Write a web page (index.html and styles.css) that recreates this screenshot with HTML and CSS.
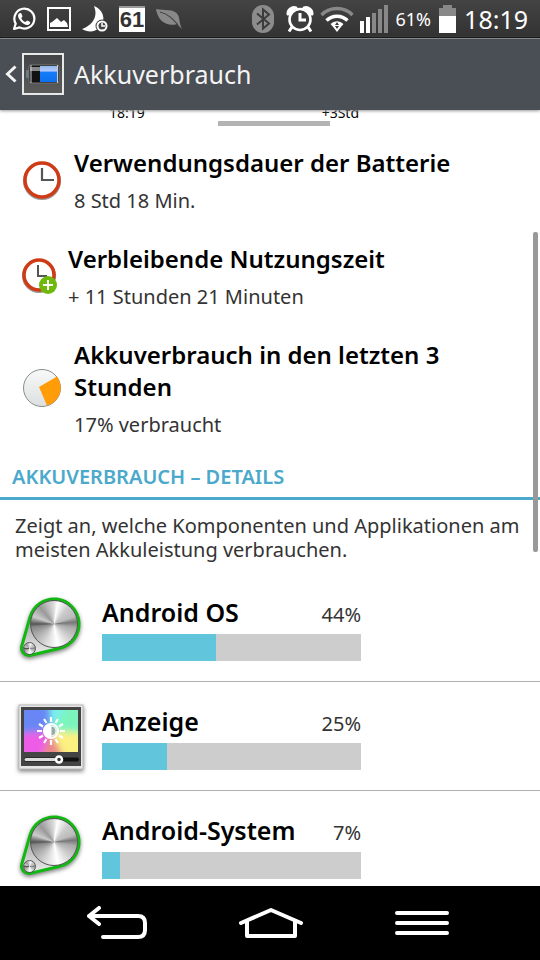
FILE: index.html
```
<!doctype html>
<html lang="de">
<head>

  <meta charset="utf-8">
  <meta name="viewport" content="width=device-width, initial-scale=1">

  <title>Akkuverbrauch</title>

  <link rel="stylesheet" href="styles.css">

</head>
<body>

  <div class="status-bar">
    <div class="notifications">
      <!-- messenger -->
      <svg width="24" height="24" viewBox="0 0 24 24">
        <path d="M2 22l1.700-5.400A10 10 0 1 1 7.600 20.400z" fill="none" stroke="#fff" stroke-width="2.200" stroke-linejoin="round"/>
        <path d="M8 6c-4 1.500-1 6.500 1.500 9s6 4.500 8.500 1.500c.8-1.500-.5-2-2.900-3l-1.600 1.500c-2-.5-3.500-2-4.200-4l1.200-1.500C9.700 7 9.500 5.500 8 6z" fill="#fff"/>
      </svg>
      <!-- picture -->
      <svg width="24" height="24" viewBox="0 0 24 24">
        <rect x="1" y="1" width="22" height="22" fill="none" stroke="#fff" stroke-width="2"/>
        <path d="M3 20v-4l2-1 5-4 4 4 3-2 3 3 1 4z" fill="#fff"/>
      </svg>
      <!-- moon with clock -->
      <svg width="26" height="26" viewBox="0 0 26 26">
        <path d="M12 0c4 9 0 19-12 23 6 4 14 3 18-2 6-7 4-17-6-21z" fill="#fff"/>
        <circle cx="20" cy="20" r="6.500" fill="#3c3c3c"/>
        <circle cx="20" cy="20" r="4.500" fill="#444" stroke="#fff" stroke-width="2"/>
        <path d="M20 17v3h3" fill="none" stroke="#fff" stroke-width="1.500"/>
      </svg>
      <span class="counter">61</span>
      <!-- leaf -->
      <svg width="26" height="22" viewBox="0 0 26 22">
        <path d="M0 1c8 2 18-1 22 6 2 4 1 8 4 14l-5-5C12 19 2 14 0 1z" fill="#888"/>
        <path d="M4 4c8 2 12 6 18 13" fill="none" stroke="#444" stroke-width="1.200"/>
      </svg>
    </div>
    <div class="system">
      <!-- bluetooth -->
      <svg class="icon-bt" width="22" height="28" viewBox="0 0 22 28">
        <rect width="22" height="28" rx="11" fill="#8c8c8c"/>
        <path d="M5 8.500l12 10-6 5V4.500l6 5-12 10" fill="none" stroke="#3c3c3c" stroke-width="2"/>
      </svg>
      <!-- alarm -->
      <svg width="28" height="28" viewBox="0 0 28 28">
        <path d="M2 9a6 6 0 0 1 8-6zM26 9a6 6 0 0 0-8-6zM6 22l-3 4.500M22 22l3 4.500" fill="#fff" stroke="#fff" stroke-width="3" stroke-linejoin="round"/>
        <circle cx="14" cy="14.500" r="10.500" fill="#3c3c3c" stroke="#fff" stroke-width="2.600"/>
        <path d="M14 8v7h6" fill="none" stroke="#fff" stroke-width="3"/>
      </svg>
      <!-- wifi -->
      <svg width="34" height="26" viewBox="0 0 34 26">
        <path d="M1.500 9a22 22 0 0 1 31 0" fill="none" stroke="#888" stroke-width="3.500"/>
        <path d="M6.500 14.500a15 15 0 0 1 21 0" fill="none" stroke="#fff" stroke-width="3.500"/>
        <path d="M10.500 18a9 9 0 0 1 13 0l-3 3.500L17 26l-3.500-4.500z" fill="#fff"/>
        <path d="M17 16l2 3h-4zM13 20h2l2 3 2-3h2" fill="#3c3c3c"/>
      </svg>
      <!-- signal -->
      <svg width="28" height="28" viewBox="0 0 28 28">
        <path d="M0 16h4v12H0zM6 12h4v16H6z" fill="#fff"/>
        <path d="M12 8h4v20h-4zM18 4h4v24h-4zM24 0h4v28h-4z" fill="#888"/>
      </svg>
      <span class="charge">61%</span>
      <!-- battery -->
      <svg width="17" height="28" viewBox="0 0 17 28">
        <path d="M4 0h9v3h4v8H0V3h4z" fill="#888"/>
        <path d="M0 11h17v17H0z" fill="#fff"/>
      </svg>
      <time class="clock">18:19</time>
    </div>
  </div>

  <header class="title-bar">
    <button class="back" aria-label="Zurück">
      <svg width="12" height="18" viewBox="0 0 12 18">
        <path d="M10.500 1.500L2.500 9l8 7.500" fill="none" stroke="#f4f4f4" stroke-width="3"/>
      </svg>
      <svg width="42" height="42" viewBox="0 0 42 42">
        <defs>
          <linearGradient id="frame" x1="0" y1="0" x2="0" y2="1">
            <stop offset="0" stop-color="#414345"/>
            <stop offset="1" stop-color="#5c5c5c"/>
          </linearGradient>
          <linearGradient id="cell" x1="0" y1="0" x2="0" y2="1">
            <stop offset="0" stop-color="#8fb8e8"/>
            <stop offset=".3" stop-color="#b5c9ff"/>
            <stop offset=".4" stop-color="#147dfa"/>
            <stop offset="1" stop-color="#0f6fee"/>
          </linearGradient>
        </defs>
        <rect x="1" y="1" width="40" height="40" fill="url(#frame)" stroke="#e8e8e8" stroke-width="2"/>
        <rect x="4" y="17" width="4" height="8" rx="1" fill="#6c7b88"/>
        <rect x="7" y="12" width="30" height="18" rx="2" fill="#111" stroke="#777"/>
        <rect x="8" y="14" width="10" height="4" fill="#888"/>
        <rect x="18" y="13" width="17" height="16" fill="url(#cell)"/>
        <path d="M9 12v18M35.500 12v18" stroke="#ccc"/>
      </svg>
    </button>
    <h1>Akkuverbrauch</h1>
  </header>

  <main class="content">

    <div class="axis">
      <span>18:19</span>
      <span>+3Std</span>
    </div>
    <div class="handle"></div>

    <section class="summary">
      <div class="entry">
        <svg width="40" height="40" viewBox="0 0 40 40">
          <circle cx="20" cy="21" r="18" fill="none" stroke="#999" stroke-width="2"/>
          <circle cx="20" cy="20" r="17" fill="#fff" stroke="#cf3b16" stroke-width="3.500"/>
          <path d="M20 8v12h12" fill="none" stroke="#555" stroke-width="2.200"/>
        </svg>
        <div>
          <h2>Verwendungsdauer der Batterie</h2>
          <p>8 Std 18 Min.</p>
        </div>
      </div>
      <div class="entry small">
        <svg width="36" height="36" viewBox="0 0 36 36">
          <circle cx="17" cy="18" r="16" fill="none" stroke="#999" stroke-width="2"/>
          <circle cx="17" cy="17" r="15" fill="#fff" stroke="#cf3b16" stroke-width="3.500"/>
          <path d="M16 7v11h9" fill="none" stroke="#555" stroke-width="2"/>
          <circle cx="26" cy="27" r="9" fill="#6fb90b"/>
          <path d="M26 22v10M21 27h10" stroke="#fff" stroke-width="2"/>
        </svg>
        <div>
          <h2>Verbleibende Nutzungszeit</h2>
          <p>+ 11 Stunden 21 Minuten</p>
        </div>
      </div>
      <div class="entry">
        <svg width="40" height="40" viewBox="0 0 40 40">
          <defs>
            <linearGradient id="pie" x1="0" y1="0" x2="0" y2="1">
              <stop offset="0" stop-color="#f8f9f9"/>
              <stop offset="1" stop-color="#dde0e0"/>
            </linearGradient>
          </defs>
          <circle cx="20" cy="20" r="18.500" fill="url(#pie)" stroke="#8c8c8c"/>
          <path d="M17 19L35 8.500A18.500 18.500 0 0 1 25 37.500z" fill="#ff9c08"/>
        </svg>
        <div>
          <h2>Akkuverbrauch in den letzten 3 Stunden</h2>
          <p>17% verbraucht</p>
        </div>
      </div>
    </section>

    <section class="details">
      <h3>AKKUVERBRAUCH – DETAILS</h3>
      <p class="hint">Zeigt an, welche Komponenten und Applikationen am meisten Akkuleistung verbrauchen.</p>

      <ul class="usage">
        <li>
          <svg class="app-icon" width="66" height="66" viewBox="0 0 66 66">
            <defs>
              <linearGradient id="plate" x1="0" y1="0" x2="0" y2="1">
                <stop offset="0" stop-color="#777"/>
                <stop offset="1" stop-color="#eee"/>
              </linearGradient>
            </defs>
            <path class="knob-plate" d="M12 22.200A25 25 0 1 1 41.800 53.300L12.700 60.300A7.500 7.500 0 0 1 3.800 51z" fill="url(#plate)" stroke="#12b812" stroke-width="3"/>
            <foreignObject x="12" y="5" width="48" height="48"><div class="metal"></div></foreignObject>
            <foreignObject x="5" y="47" width="13" height="13"><div class="metal"></div></foreignObject>
          </svg>
          <div class="app">
            <h4>Android OS</h4>
            <span class="share">44%</span>
            <div class="bar"><div class="fill" style="width: 44%"></div></div>
          </div>
        </li>
        <li>
          <svg class="app-icon" width="66" height="66" viewBox="0 0 66 66">
            <defs>
              <clipPath id="screen"><rect x="6" y="6" width="54" height="42"/></clipPath>
              <filter id="soft"><feGaussianBlur stdDeviation="3"/></filter>
            </defs>
            <rect class="frame" x="1" y="1" width="64" height="64" fill="#e6e6e6" stroke="#bbb"/>
            <rect x="3" y="3" width="60" height="59" fill="#444"/>
            <g clip-path="url(#screen)">
              <rect x="6" y="6" width="54" height="42" fill="#7cf0ec"/>
              <g filter="url(#soft)">
                <path d="M-6-6h36l3 33-39 5z" fill="#6787f5"/>
                <path d="M50 0h18v36L33 27z" fill="#7bf5bd"/>
                <path d="M33 27l35 2v28H43z" fill="#fbf080"/>
                <path d="M33 27L-6 30v28h32z" fill="#ed5be6"/>
                <path d="M33 27l14 30H22z" fill="#ea8988"/>
              </g>
            </g>
            <g stroke="#fff" stroke-width="2.200" fill="none">
              <circle cx="33" cy="27" r="7"/>
              <path d="M33 13v5M33 36v5M19 27h5M42 27h5M26 15l2.500 4M37.500 35l2.500 4M21 20l4 2.500M41 31.500l4 2.500M40 15l-2.500 4M28.500 35L26 39M45 20l-4 2.500M25 31.500L21 34"/>
            </g>
            <path d="M33 20a7 7 0 0 0 0 14z" fill="#fff"/>
            <path d="M33 22v10a5 5 0 0 0 0-10z" fill="#9aa" stroke="#fff"/>
            <path d="M8 55.500h51" stroke="#111" stroke-width="4" stroke-linecap="round"/>
            <path d="M8 55.500h30" stroke="#ddd" stroke-width="3" stroke-linecap="round"/>
            <circle cx="41" cy="55.500" r="3" fill="#333" stroke="#fff" stroke-width="2.500"/>
          </svg>
          <div class="app">
            <h4>Anzeige</h4>
            <span class="share">25%</span>
            <div class="bar"><div class="fill" style="width: 25%"></div></div>
          </div>
        </li>
        <li>
          <svg class="app-icon" width="66" height="66" viewBox="0 0 66 66">
            <path class="knob-plate" d="M12 22.200A25 25 0 1 1 41.800 53.300L12.700 60.300A7.500 7.500 0 0 1 3.800 51z" fill="url(#plate)" stroke="#12b812" stroke-width="3"/>
            <foreignObject x="12" y="5" width="48" height="48"><div class="metal"></div></foreignObject>
            <foreignObject x="5" y="47" width="13" height="13"><div class="metal"></div></foreignObject>
          </svg>
          <div class="app">
            <h4>Android-System</h4>
            <span class="share">7%</span>
            <div class="bar"><div class="fill" style="width: 7%"></div></div>
          </div>
        </li>
      </ul>
    </section>

    <div class="scroll-thumb"></div>
  </main>

  <nav class="nav-bar">
    <button aria-label="Zurück">
      <svg width="60" height="34" viewBox="0 0 60 34">
        <path d="M12 2L2 10l10 8M2 10h49q7 0 7 7v7q0 7-7 7H16" fill="none" stroke="#fff" stroke-width="4" stroke-linecap="round" stroke-linejoin="round"/>
      </svg>
    </button>
    <button aria-label="Startseite">
      <svg width="64" height="32" viewBox="0 0 64 32">
        <path d="M2 16L32 3l30 13M8 15v14h48V15" fill="none" stroke="#fff" stroke-width="4" stroke-linecap="round" stroke-linejoin="round"/>
      </svg>
    </button>
    <button aria-label="Menü">
      <svg width="54" height="24" viewBox="0 0 54 24">
        <path d="M2 2h50M2 12h50M2 22h50" stroke="#fff" stroke-width="4" stroke-linecap="round"/>
      </svg>
    </button>
  </nav>

</body>
</html>
```
FILE: styles.css
```
* {
  box-sizing: border-box;
}

body {
  display: flex;
  flex-direction: column;
  height: 100vh;
  margin: 0;
  background: #fff;
  color: #000;
  font-family: "Noto Sans", "Open Sans", sans-serif;
}

h1, h2, h3, h4, p, ul {
  margin: 0;
  padding: 0;
}

svg {
  display: block;
  flex: none;
}

button {
  padding: 0;
  border: none;
  background: none;
}

.status-bar {
  display: flex;
  flex: none;
  justify-content: space-between;
  align-items: center;
  height: 38px;
  padding: 0 12px;
  border-bottom: 1px solid #000;
  background: linear-gradient(#444, #323232);
  color: #fff;
}

.notifications, .system {
  display: flex;
  align-items: center;
  gap: 11px;
}

.system {
  gap: 6px;
}

.counter {
  width: 26px;
  border-top: 2px solid #999;
  background: #fff;
  color: #333;
  font: bold 22px/24px "Liberation Sans", sans-serif;
  text-align: center;
}

.icon-bt {
  margin-right: 6px;
}

.charge {
  margin: 0 2px;
  font-size: 18px;
}

.clock {
  margin-left: 2px;
  font-size: 25px;
}

.title-bar {
  display: flex;
  flex: none;
  align-items: center;
  gap: 10px;
  height: 72px;
  padding: 0 5px 2px;
  border-top: 1px solid #888;
  background: #4a4e55;
  color: #f4f4f4;
  box-shadow: 0 1px 3px #999;
  z-index: 1;
}

.title-bar h1 {
  font-size: 25px;
  font-weight: normal;
}

.back {
  display: flex;
  align-items: center;
  gap: 5px;
}

.content {
  position: relative;
  flex: 1;
  min-height: 0;
  overflow: hidden;
}

/* scrolled half under the title bar */
.axis {
  display: flex;
  align-items: flex-end;
  justify-content: space-between;
  height: 11px;
  padding: 0 181px 0 109px;
  font-size: 14px;
  line-height: 16px;
}

.handle {
  width: 112px;
  height: 5px;
  margin: 0 0 8px 218px;
  background: #b3b3b3;
}

.entry {
  display: flex;
  align-items: center;
  gap: 12px;
  padding: 13px 22px 17px;
}

.entry.small {
  gap: 10px;
}

h2, h4 {
  font-size: 24px;
  font-weight: 600;
  line-height: 32px;
}

h4 {
  font-size: 25px;
}

.entry p {
  margin-top: 10px;
  color: #333;
  font-size: 20px;
  line-height: 24px;
}

.details h3 {
  padding: 11px 12px 8px;
  border-bottom: 3px solid #4ba9cb;
  color: #4ba9cb;
  font-size: 20px;
  font-weight: 600;
  line-height: 24px;
}

.hint {
  padding: 14px 15px 11px;
  color: #333;
  font-size: 20px;
  line-height: 24px;
}

.usage {
  list-style: none;
}

.usage li {
  display: flex;
  gap: 18px;
  padding: 23px 18px 20px;
  border-bottom: 1px solid #b0b0b0;
}

.app-icon {
  margin: -1px 0;
  overflow: visible;
}

.knob-plate, .frame {
  filter: drop-shadow(0 2px 2px rgba(0, 0, 0, .5));
}

.metal {
  width: 100%;
  height: 100%;
  border: 1px solid #555;
  border-radius: 50%;
  background: conic-gradient(#ddd, #fff 10deg, #ccc 40deg, #bbb 70deg, #777 85deg, #aaa 100deg, #ccc 130deg, #fff 170deg, #ddd 200deg, #aaa 240deg, #888 262deg, #555 270deg, #ccc 290deg, #999 320deg, #ddd);
}

.app {
  display: grid;
  grid-template-columns: 1fr auto;
  align-items: baseline;
  width: 259px;
  row-gap: 6px;
}

.share {
  color: #333;
  font-size: 20px;
  line-height: 24px;
}

.bar {
  grid-column: 1 / -1;
  height: 27px;
  background: #cdcdcd;
}

.fill {
  height: 100%;
  background: #61c5dc;
}

.scroll-thumb {
  position: absolute;
  top: 122px;
  right: 2px;
  width: 5px;
  height: 320px;
  border-radius: 2px;
  background: #999;
}

.nav-bar {
  display: flex;
  flex: none;
  justify-content: space-between;
  align-items: center;
  height: 74px;
  padding: 0 91px 0 87px;
  background: #000;
}
```
